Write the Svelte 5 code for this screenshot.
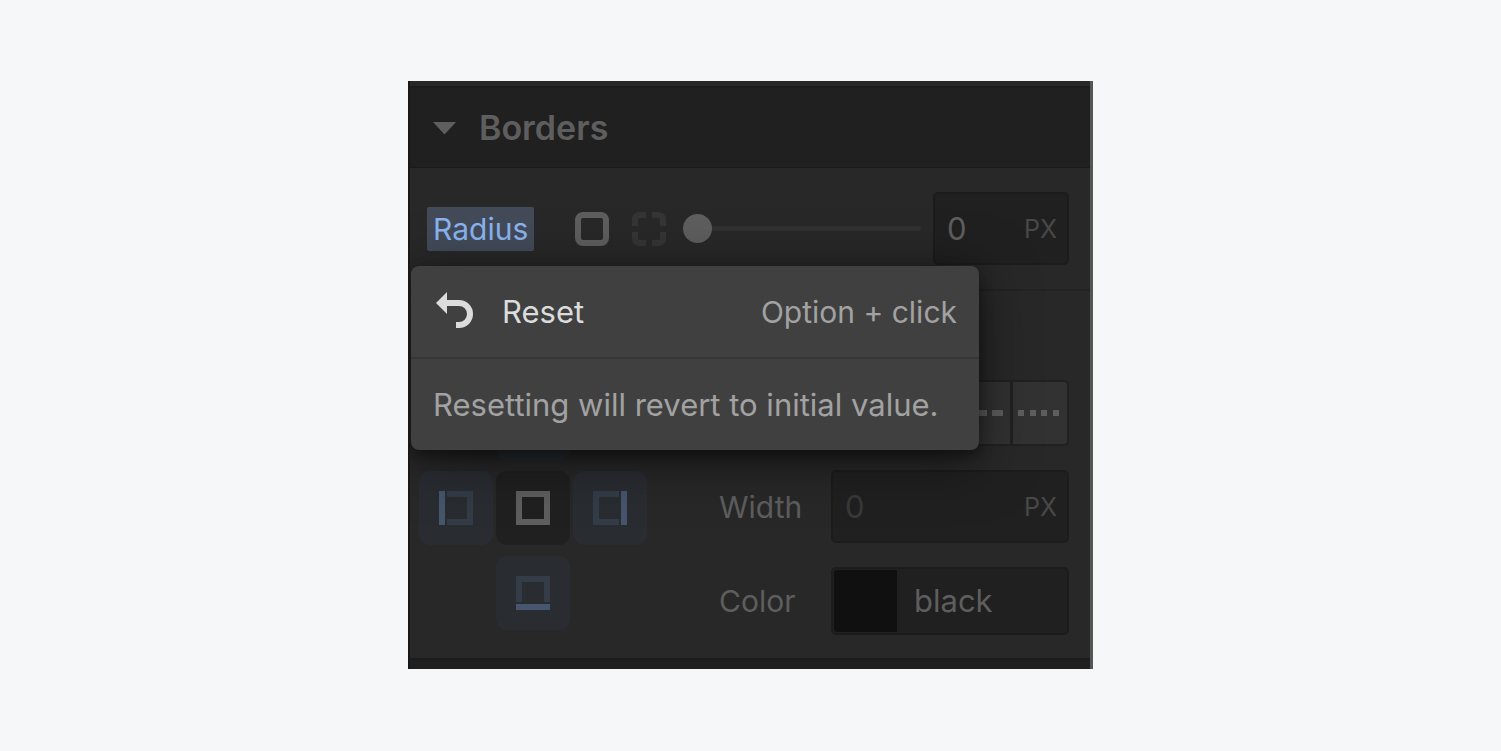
<script>
    let radius = $state(0);
    let width = $state('');
    let color = $state('black');
    let side = $state('all');

    const sides = [
        {id: 'top', bar: 'M0 0H34V6H0Z', rest: 'M0 8H6V28H28V8H34V34H0Z'},
        {id: 'left', bar: 'M0 0H6V34H0Z', rest: 'M8 0H34V34H8V28H28V6H8Z'},
        {id: 'all', bar: 'M0 0H34V34H0Z M6 6V28H28V6Z', rest: ''},
        {id: 'right', bar: 'M28 0H34V34H28Z', rest: 'M26 0H0V34H26V28H6V6H26Z'},
        {id: 'bottom', bar: 'M0 28H34V34H0Z', rest: 'M0 26V0H34V26H28V6H6V26Z'}
    ];
</script>

<main>
    <section class="panel">
        <header>
            <button class="toggle" aria-expanded="true">
                <svg width="23" height="12" viewBox="0 0 23 12"><path d="M0 0H23L12 12H11Z"/></svg>
                <span>Borders</span>
            </button>
        </header>

        <div class="radius-row">
            <label class="radius-label" for="radius">Radius</label>
            <div class="corner-modes">
                <button aria-label="All corners">
                    <svg width="34" height="34" viewBox="0 0 34 34">
                        <rect x="3" y="3" width="28" height="28" rx="5"/>
                    </svg>
                </button>
                <button class="dim" aria-label="Individual corners">
                    <svg width="34" height="34" viewBox="0 0 34 34">
                        <path d="M3 14V8Q3 3 8 3H14M20 3H26Q31 3 31 8V14M31 20V26Q31 31 26 31H20M14 31H8Q3 31 3 26V20"/>
                    </svg>
                </button>
            </div>
            <input class="slider" type="range" min="0" max="100" bind:value={radius} aria-label="Radius slider"/>
            <div class="field">
                <input id="radius" type="text" bind:value={radius}/>
                <button class="unit">PX</button>
            </div>

            <div class="popover">
                <button class="reset">
                    <svg width="38" height="40" viewBox="0 0 38 40">
                        <path class="head" d="M0 11L11 0V22Z"/>
                        <path class="tail" d="M10 11H23A11 11 0 0 1 23 33H20"/>
                    </svg>
                    <span>Reset</span>
                    <kbd>Option + click</kbd>
                </button>
                <p>Resetting will revert to initial value.</p>
            </div>
        </div>

        <div class="borders">
            <div class="sides">
                {#each sides as item}
                    <button
                        class="side {item.id}"
                        class:active={side === item.id}
                        aria-label="Border {item.id}"
                        onclick={() => side = item.id}
                    >
                        <svg width="34" height="34" viewBox="0 0 34 34" fill-rule="evenodd">
                            <path class="rest" d={item.rest}/>
                            <path class="bar" d={item.bar}/>
                        </svg>
                    </button>
                {/each}
            </div>

            <div class="settings">
                <div class="styles">
                    <button aria-label="Dashed">
                        <svg width="46" height="6" viewBox="0 0 46 6"><path d="M0 0H10V6H0ZM16 0H27V6H16ZM32 0H43V6H32Z"/></svg>
                    </button>
                    <button aria-label="Dotted">
                        <svg width="44" height="6" viewBox="0 0 44 6"><path d="M0 0H6V6H0ZM12 0H18V6H12ZM23 0H29V6H23ZM35 0H41V6H35Z"/></svg>
                    </button>
                </div>

                <label for="width">Width</label>
                <div class="field">
                    <input id="width" type="text" placeholder="0" bind:value={width}/>
                    <button class="unit">PX</button>
                </div>

                <label for="color">Color</label>
                <div class="field color-field">
                    <button class="swatch" style="background-color: {color}" aria-label="Pick color"></button>
                    <input id="color" type="text" bind:value={color}/>
                </div>
            </div>
        </div>

        <footer></footer>
    </section>
</main>

<style>
    :global(body) {
        margin: 0;
        background-color: #f5f7f9;
    }

    main {
        display: flex;
        justify-content: center;
        padding: 81px 24px;
        font-family: Inter, "Liberation Sans", sans-serif;
        font-size: 31px;
        line-height: 40px;
        color: #5e5e5e;
    }

    .panel {
        box-sizing: border-box;
        width: 100%;
        max-width: 685px;
        overflow: hidden;
        background-color: #282828;
        border-left: 2px solid #181818;
        border-right: 3px solid #555;
    }

    button, input {
        box-sizing: border-box;
        margin: 0;
        padding: 0;
        border: none;
        background: none;
        font: inherit;
        color: inherit;
    }

    svg {
        display: block;
        flex-shrink: 0;
    }

    header {
        margin-top: 5px;
        background-color: #202020;
        border-top: 2px solid #1c1c1c;
        border-bottom: 1px solid #1a1a1a;
    }

    .toggle {
        display: flex;
        align-items: center;
        gap: 23px;
        width: 100%;
        padding: 20px 23px 19px;
        font-size: 34px;
        font-weight: 600;
    }

    .toggle svg {
        fill: #5e5e5e;
    }

    .radius-row {
        position: relative;
        display: flex;
        align-items: center;
        padding: 24px 21px 24px 17px;
        border-bottom: 2px solid #232323;
    }

    .radius-label {
        padding: 2px 6px;
        border-radius: 2px;
        background-color: #434b59;
        color: #8ab4f0;
    }

    label, kbd {
        font-size: 30px;
    }

    .corner-modes {
        display: flex;
        gap: 23px;
        margin: 0 17px 0 41px;
    }

    .corner-modes svg {
        fill: none;
        stroke: #5e5e5e;
        stroke-width: 6;
    }

    .corner-modes .dim svg {
        stroke: #353535;
    }

    .slider {
        appearance: none;
        flex: 1;
        min-width: 0;
        height: 29px;
        margin-right: 12px;
    }

    .slider::-webkit-slider-runnable-track {
        height: 5px;
        border-radius: 3px;
        background-color: #313131;
    }

    .slider::-webkit-slider-thumb {
        appearance: none;
        width: 29px;
        height: 29px;
        margin-top: -12px;
        border-radius: 50%;
        background-color: #5e5e5e;
    }

    .field {
        box-sizing: border-box;
        display: flex;
        align-items: center;
        height: 73px;
        padding: 0 10px 0 12px;
        border: 2px solid #1c1c1c;
        border-radius: 5px;
        background-color: #202020;
    }

    .radius-row .field {
        width: 136px;
    }

    .field input {
        flex: 1;
        min-width: 0;
        width: 100%;
        outline: none;
    }

    .field input::placeholder {
        color: #393939;
        opacity: 1;
    }

    .unit {
        font-size: 25px;
        color: #484848;
    }

    .popover {
        position: absolute;
        z-index: 1;
        top: calc(100% - 23px);
        left: 1px;
        width: 568px;
        border-radius: 8px;
        background-color: #404040;
        color: #a2a2a2;
        box-shadow: 0 6px 14px rgba(0, 0, 0, 0.4), 0 10px 56px rgba(0, 0, 0, 0.5);
    }

    .reset {
        display: flex;
        align-items: center;
        width: 100%;
        padding: 26px 22px 25px 25px;
        border-bottom: 2px solid #363636;
        color: #dcdcdc;
    }

    .reset span {
        margin-left: 28px;
    }

    .reset .head {
        fill: #dcdcdc;
    }

    .reset .tail {
        fill: none;
        stroke: #dcdcdc;
        stroke-width: 6;
    }

    kbd {
        margin-left: auto;
        font-family: inherit;
        color: #a2a2a2;
    }

    .popover p {
        margin: 0;
        padding: 26px 22px 25px;
    }

    .borders {
        display: flex;
        justify-content: space-between;
        padding: 89px 21px 23px 9px;
    }

    .sides {
        display: grid;
        grid-template: repeat(3, 74px) / repeat(3, 74px);
        grid-template-areas: ". top ." "left all right" ". bottom .";
        gap: 11px 3px;
        margin-top: 6px;
    }

    .side {
        display: grid;
        place-items: center;
        border-radius: 11px;
        background-color: #292d32;
    }

    .top { grid-area: top; }
    .left { grid-area: left; }
    .all { grid-area: all; }
    .right { grid-area: right; }
    .bottom { grid-area: bottom; }

    .side .rest {
        fill: #333c47;
    }

    .side .bar {
        fill: #46566d;
    }

    .side.active {
        background-color: #202020;
    }

    .side.active .bar {
        fill: #5e5e5e;
    }

    .settings {
        display: grid;
        grid-template-columns: 112px 238px;
        gap: 24px 0;
        align-items: center;
        align-content: start;
    }

    .styles {
        grid-column: 2;
        justify-self: end;
        display: flex;
        gap: 3px;
        padding: 2px;
        border-radius: 5px;
        background-color: #212121;
    }

    .styles button {
        display: grid;
        place-items: center;
        width: 54px;
        height: 62px;
        background-color: #323232;
    }

    .styles button:last-child {
        border-radius: 0 3px 3px 0;
    }

    .styles svg {
        fill: #5e5e5e;
    }

    .color-field {
        height: 68px;
        padding: 0 10px 0 0;
    }

    .swatch {
        width: 63px;
        height: 62px;
        margin: 0 17px 0 1px;
        border-radius: 3px 0 0 3px;
        opacity: 0.5;
    }

    footer {
        height: 9px;
        border-top: 2px solid #1c1c1c;
        background-color: #202020;
    }
</style>
